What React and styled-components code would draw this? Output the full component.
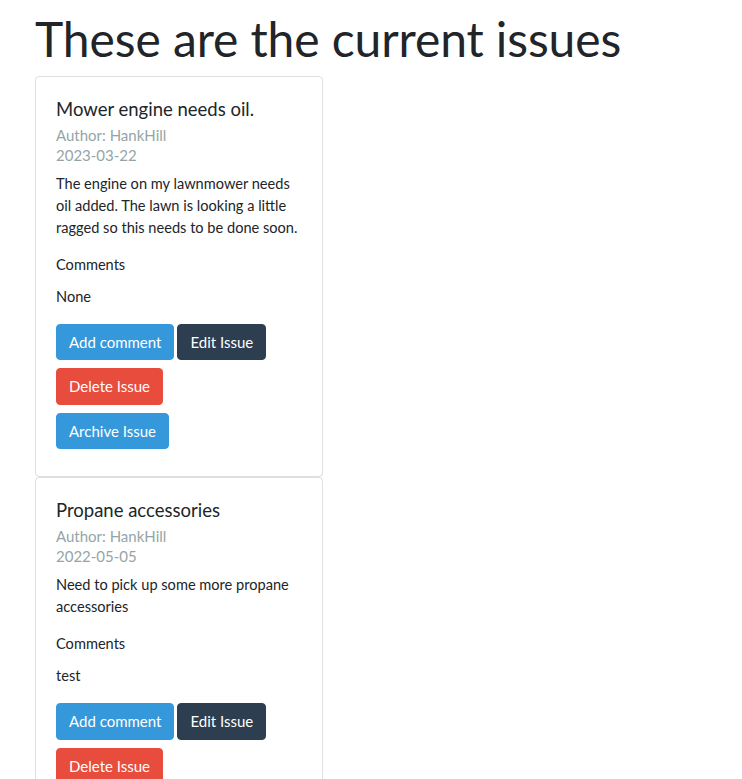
import React from 'react'
import styled, { createGlobalStyle } from 'styled-components'

const GlobalStyle = createGlobalStyle`
  body {
    margin: 0;
    font-family: Lato, "Helvetica Neue", Arial, sans-serif;
    font-size: 15px;
    line-height: 1.5;
    color: #212529;
    background: #fff;
  }
`

const issues = [
  {
    id: 1,
    title: 'Mower engine needs oil.',
    author: 'HankHill',
    date: '2023-03-22',
    text: 'The engine on my lawnmower needs oil added. The lawn is looking a little ragged so this needs to be done soon.',
    comments: ['None'],
    archive: true,
  },
  {
    id: 2,
    title: 'Propane accessories',
    author: 'HankHill',
    date: '2022-05-05',
    text: 'Need to pick up some more propane accessories',
    comments: ['test'],
    archive: true,
  },
]

const App = () => {
  return (
    <>
      <GlobalStyle />
      <Wrapper>
        <Heading>These are the current issues</Heading>
        {issues.map(issue => (
          <Card key={issue.id}>
            <Title>{issue.title}</Title>
            <Muted>Author: {issue.author}</Muted>
            <Muted $last>{issue.date}</Muted>
            <Text>{issue.text}</Text>
            <CommentsLabel>Comments</CommentsLabel>
            {issue.comments.map(c => (
              <Comment key={c}>{c}</Comment>
            ))}
            <ButtonRow>
              <Button $variant="info">Add comment</Button>
              <Button $variant="primary">Edit Issue</Button>
              <Button $variant="danger">Delete Issue</Button>
            </ButtonRow>
            {issue.archive && (
              <ButtonRow>
                <Button $variant="info">Archive Issue</Button>
              </ButtonRow>
            )}
          </Card>
        ))}
      </Wrapper>
    </>
  )
}

const colors = {
  info: '#3498db',
  primary: '#2c3e50',
  danger: '#e74c3c',
}

const Wrapper = styled.div`
  padding: 10px 35px 0;
`

const Heading = styled.h1`
  margin: 0 0 8px;
  font-size: 48px;
  font-weight: 400;
  line-height: 1.2;
  letter-spacing: -0.1px;
`

const Card = styled.div`
  width: 246px;
  padding: 21px 20px 19px;
  border: 1px solid rgba(0, 0, 0, 0.125);
  border-radius: 4px;
`

const Title = styled.h5`
  margin: 0 0 5px;
  font-size: 18.5px;
  font-weight: 400;
  line-height: 1.2;
`

const Muted = styled.h6`
  margin: 0 0 ${p => (p.$last ? '8px' : '0')};
  font-size: 15px;
  font-weight: 400;
  line-height: 20px;
  color: #95a5a6;
`

const Text = styled.p`
  margin: 0 0 15px;
  font-size: 14.6px;
  line-height: 22px;
`

const CommentsLabel = styled.p`
  margin: 0 0 10px;
  font-size: 14.6px;
  line-height: 22px;
`

const Comment = styled.p`
  margin: 0 0 16px;
  font-size: 14.6px;
  line-height: 22px;
`

const ButtonRow = styled.div`
  display: flex;
  flex-wrap: wrap;
  column-gap: 3px;
`

const Button = styled.button`
  margin-bottom: 8px;
  padding: 6px 12px;
  font-family: inherit;
  font-size: 15px;
  line-height: 1.5;
  color: #fff;
  background: ${p => colors[p.$variant]};
  border: 1px solid ${p => colors[p.$variant]};
  border-radius: 4px;
  cursor: pointer;
`

export default App
